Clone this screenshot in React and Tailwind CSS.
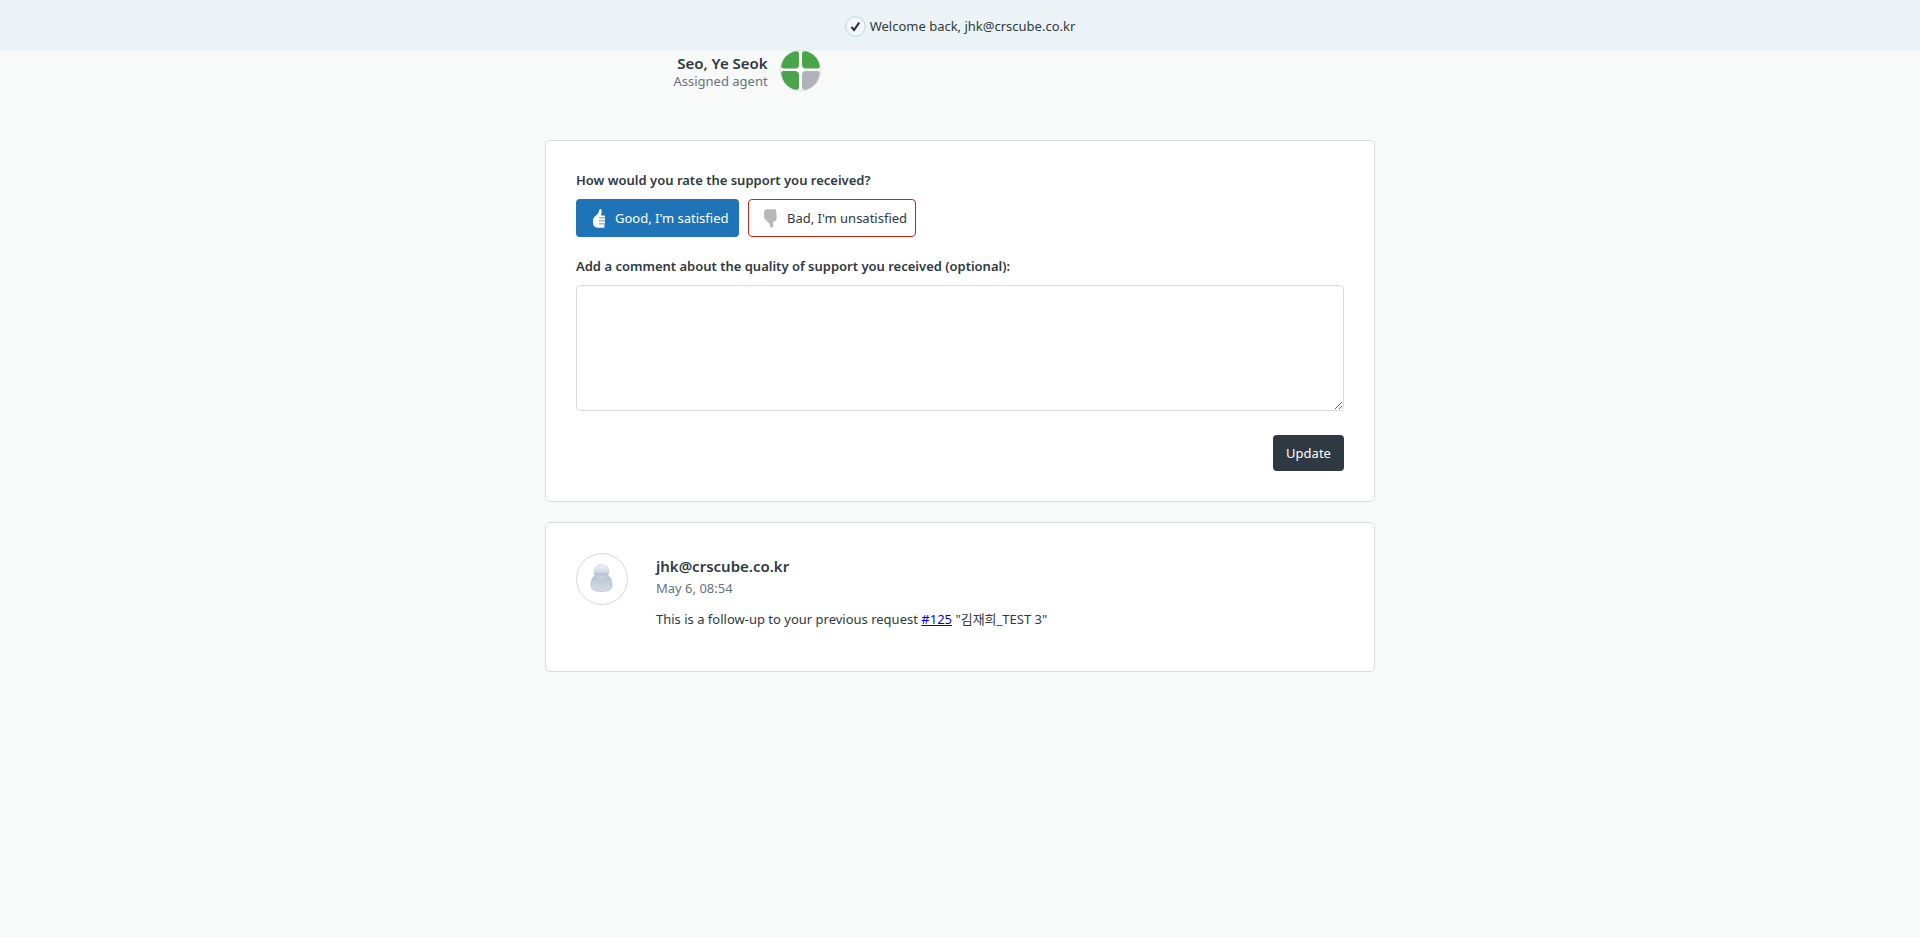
import React, { useState } from 'react';

const Banner = () => (
  <header className="flex h-[51px] items-center justify-center gap-1 bg-[#ebf3f6] pt-0.5">
    <svg width="21" height="21" viewBox="0 0 21 21" aria-hidden="true">
      <circle cx="10.5" cy="10.5" r="9.8" fill="#f1f7fa" stroke="#b9d6e6" />
      <path d="M6.4 10.8 9 14l5.2-7.4" fill="none" stroke="#2b2f33" strokeWidth="2" />
    </svg>
    <p className="text-[13px]">Welcome back, jhk@crscube.co.kr</p>
  </header>
);

const AgentAvatar = () => (
  <svg width="42" height="42" viewBox="0 0 42 42" className="-mt-px shrink-0" role="img" aria-label="Seo, Ye Seok">
    <circle cx="20.500" cy="20.500" r="20.2" fill="#fff" stroke="#dcdfe0" strokeWidth="0.9" />
    <path d="M3.5 18.5Q.8 18.500 1.300 15.500C3 8 8 3 15.500 1.300Q19 .8 19 3.500V14.500Q19 18.500 15 18.500Z" fill="#49a54a" />
    <path d="M37.500 18.500Q40.200 18.500 39.700 15.500C38 8 33 3 25.500 1.300Q22 .8 22 3.500V14.500Q22 18.500 26 18.500Z" fill="#49a54a" />
    <path d="M3.500 21Q.8 21 1.300 24C3 33 8 38 15.500 39.700Q19 40.200 19 37.500V25Q19 21 15 21Z" fill="#49a54a" />
    <path d="M37.500 21Q40.200 21 39.700 24C38 33 33 38 25.500 39.700Q22 40.200 22 37.500V25Q22 21 26 21Z" fill="#b1b2b7" />
  </svg>
);

const UserAvatar = () => (
  <svg width="52" height="52" viewBox="0 0 52 52" className="shrink-0" role="img" aria-label="jhk@crscube.co.kr">
    <defs>
      <linearGradient id="user-head" x1="0" y1="0" x2="0" y2="1">
        <stop offset="0" stopColor="#eef1f6" />
        <stop offset="0.5" stopColor="#d3dae5" />
        <stop offset="0.6" stopColor="#b9c4d5" />
        <stop offset="1" stopColor="#ccd5e2" />
      </linearGradient>
      <linearGradient id="user-body" x1="0" y1="0" x2="0" y2="1">
        <stop offset="0" stopColor="#b6c1d2" />
        <stop offset="1" stopColor="#d6dde7" />
      </linearGradient>
    </defs>
    <circle cx="26" cy="26" r="25.5" fill="#fff" stroke="#d8d8d8" />
    <path d="M20 22.5c-3.500 1-5 5-5 9.500 0 4.500 3 6.500 10.500 6.500s10.500-2 10.500-6.500c0-4.500-1.500-8.500-5-9.500Z" fill="url(#user-body)" stroke="#a9b5c8" strokeWidth="0.6" />
    <circle cx="25.500" cy="19" r="7.600" fill="url(#user-head)" stroke="#c3ccd9" strokeWidth="0.6" />
  </svg>
);

const ThumbUp = () => (
  <svg width="12" height="19" viewBox="0 0 12 19" fill="currentColor" aria-hidden="true">
    <path d="M7 0C8.500 0 9 1.200 8.700 2.800L8 6.500H11Q12 6.500 12 7.500V8.600H6V9.200H12V11.600H6V12.200H12V14.600H6V15.200H11.500V17.500Q11.500 18.700 10.500 18.700H4.500C1.800 18.700 0 16.800 0 13.500V11.500C0 9.300.9 8.400 2.300 7.200C4.400 5.400 6 3.800 6.300 1Z" />
  </svg>
);

const ThumbDown = () => (
  <svg width="13" height="19" viewBox="0 0 13 19" fill="currentColor" aria-hidden="true">
    <path d="M3 .2H10.500Q12 .2 12 1.500V3.200Q12.800 3.600 12.500 4.800V6.200Q13 6.800 12.500 8V9.500Q12.500 12.400 10 12.400H9L9.200 16.500Q9.200 18.800 7.400 18.800Q6.200 18.800 6.100 17C5.900 15 5 13.800 3 12.200C1 10.600 0 9.500 0 7.500V4.500C0 2 .8.200 3 .2Z" />
  </svg>
);

const RatingForm = () => {
  const [rating, setRating] = useState('good');
  const [comment, setComment] = useState('');

  return (
    <form
      className="rounded-[5px] border border-[#d8dcde] bg-white px-[30px] pt-[29px] pb-[30px]"
      onSubmit={(e) => e.preventDefault()}
    >
      <h2 className="text-[13px] leading-5 font-semibold">How would you rate the support you received?</h2>
      <div className="mt-[9px] flex gap-[9px]">
        <button
          type="button"
          aria-pressed={rating === 'good'}
          onClick={() => setRating('good')}
          className="flex h-[38px] w-[163px] items-center gap-[10px] rounded bg-[#1f73b7] pl-[17px] text-[13px] whitespace-nowrap text-white"
        >
          <ThumbUp />
          <span className="pt-0.5">Good, I'm satisfied</span>
        </button>
        <button
          type="button"
          aria-pressed={rating === 'bad'}
          onClick={() => setRating('bad')}
          className="flex h-[38px] w-[168px] items-center gap-[10px] rounded border border-[#c72a1c] bg-white pl-[15px] text-[13px] whitespace-nowrap"
        >
          <span className="text-[#b8b8b8]"><ThumbDown /></span>
          <span className="pt-0.5">Bad, I'm unsatisfied</span>
        </button>
      </div>
      <label htmlFor="comment" className="mt-[19px] block text-[13px] leading-5 font-semibold">
        Add a comment about the quality of support you received (optional):
      </label>
      <textarea
        id="comment"
        value={comment}
        onChange={(e) => setComment(e.target.value)}
        className="mt-[9px] block h-[126px] w-full resize rounded border border-[#d8dcde] bg-white p-2 text-[13px] outline-none"
      />
      <div className="mt-6 flex justify-end">
        <button type="submit" className="h-9 w-[71px] rounded bg-[#2f3941] pt-0.5 text-[13px] text-white">
          Update
        </button>
      </div>
    </form>
  );
};

const RequestComment = () => (
  <article className="mt-5 flex gap-7 rounded-[5px] border border-[#d8dcde] bg-white px-[30px] pt-[30px] pb-[42px]">
    <UserAvatar />
    <div className="pt-[3px]">
      <h3 className="text-[15px] leading-5 font-semibold">jhk@crscube.co.kr</h3>
      <time className="block text-[13px] leading-6 text-[#68737d]">May 6, 08:54</time>
      <p className="mt-[9px] text-[13px] leading-5">
        This is a follow-up to your previous request{' '}
        <a href="#125" className="text-[#0000ee] underline">#125</a> "김재희_TEST 3"
      </p>
    </div>
  </article>
);

const App = () => {
  return (
    <div className="min-h-screen bg-[#f8f9f9] font-['Noto_Sans','Noto_Sans_CJK_KR',sans-serif] text-[#2f3941]">
      <Banner />
      <main className="mx-auto w-full max-w-[830px]">
        <div className="mb-[49px] flex h-10 w-1/3 justify-end gap-3">
          <div className="pt-[3px] text-right">
            <p className="text-[15px] leading-[18px] font-semibold">Seo, Ye Seok</p>
            <p className="text-[13px] leading-[18px] text-[#68737d]">Assigned agent</p>
          </div>
          <AgentAvatar />
        </div>
        <RatingForm />
        <RequestComment />
      </main>
    </div>
  );
};

export default App;
